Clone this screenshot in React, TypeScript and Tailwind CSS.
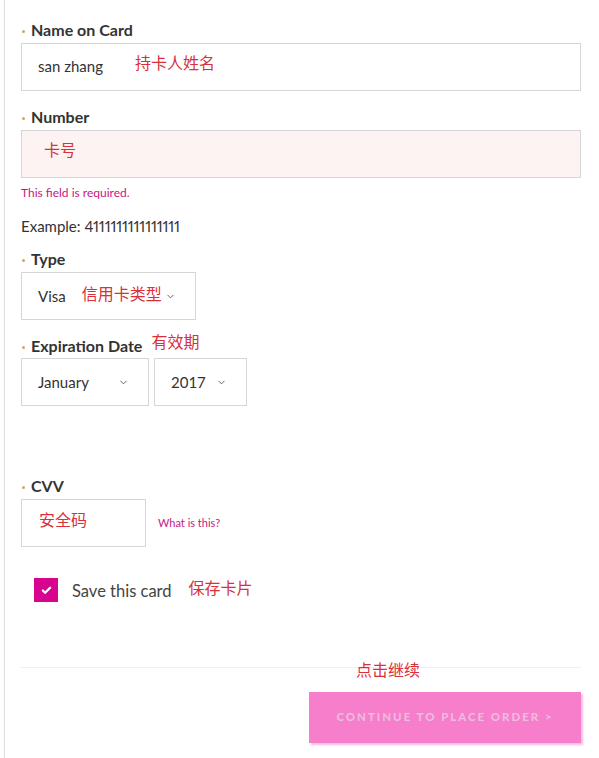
import { Check, ChevronDown } from "lucide-react"

const font = { fontFamily: "Lato, 'Noto Sans CJK SC', sans-serif" }

function Label({ children, note }: { children: React.ReactNode; note?: string }) {
  return (
    <div className="flex h-5 items-center gap-[6px] pl-[1px]">
      <span className="mt-[3px] h-[3px] w-[3px] rounded-full bg-[#c9a86b]" />
      <span className="text-[16px] font-bold text-[#333]">{children}</span>
      {note && <span className="ml-[3px] -mt-2 text-[16px] font-normal text-[#d9303a]">{note}</span>}
    </div>
  )
}

function Select({ value, note, width }: { value: string; note?: string; width: string }) {
  return (
    <div className={`flex h-12 items-center border border-[#d6d6d6] bg-white pl-4 pr-[19px] text-[15px] text-[#333] ${width}`}>
      <span>{value}</span>
      {note && <span className="ml-4 -mt-1 text-[16px] text-[#d9303a]">{note}</span>}
      <ChevronDown className="ml-auto h-[11px] w-[11px] shrink-0 text-[#444]" strokeWidth={1.75} />
    </div>
  )
}

export default function App() {
  return (
    <div className="min-h-[758px] bg-white" style={font}>
      <div className="ml-1 min-h-[758px] border-l border-[#dedede] pl-4 pr-[18px] pt-5">
        {/* name */}
        <Label>Name on Card</Label>
        <div className="mt-[3px] flex h-12 items-center border border-[#d6d6d6] pl-4 text-[15px] text-[#333]">
          <span className="-mt-[2px]">san zhang</span>
          <span className="ml-[32px] -mt-2 text-[16px] text-[#d9303a]">持卡人姓名</span>
        </div>

        {/* number */}
        <div className="mt-4">
          <Label>Number</Label>
          <div className="mt-[3px] flex h-12 items-center border border-[#d6d6d6] bg-[#fdf3f2] pl-[22px]">
            <span className="-mt-[9px] text-[16px] text-[#d9303a]">卡号</span>
          </div>
          <div className="mt-[8px] text-[12px] leading-[14px] text-[#c7177f]">This field is required.</div>
          <div className="mt-4 text-[15px] leading-5 text-[#333] proportional-nums">
            Example: <span className="tracking-[-0.15px]">4111111111111111</span>
          </div>
        </div>

        {/* type */}
        <div className="mt-[13px]">
          <Label>Type</Label>
          <div className="mt-[3px]">
            <Select value="Visa" note="信用卡类型" width="w-[175px]" />
          </div>
        </div>

        {/* expiry */}
        <div className="mt-4">
          <Label note="有效期">Expiration Date</Label>
          <div className="mt-[2px] flex gap-[5px]">
            <Select value="January" width="w-32" />
            <Select value="2017" width="w-[93px]" />
          </div>
        </div>

        {/* cvv */}
        <div className="mt-[70px]">
          <Label>CVV</Label>
          <div className="mt-[3px] flex items-center">
            <div className="flex h-12 w-[125px] items-center border border-[#d6d6d6] pl-[17px]">
              <span className="-mt-[6px] text-[16px] text-[#d9303a]">安全码</span>
            </div>
            <span className="ml-3 text-[11px] text-[#c7177f]">What is this?</span>
          </div>
        </div>

        {/* save */}
        <div className="mt-[30px] flex items-center pl-[13px]">
          <div className="flex h-6 w-6 items-center justify-center bg-[#d6048e]">
            <Check className="h-[11px] w-[11px] text-white" strokeWidth={5} />
          </div>
          <span className="ml-[14px] mt-[2px] text-[16.5px] text-[#444]">Save this card</span>
          <span className="ml-[17px] -mt-1 text-[16px] text-[#d9303a]">保存卡片</span>
        </div>

        {/* footer */}
        <div className="relative mt-[63px] border-t border-[#f0f0f0]">
          <span className="absolute left-[335px] -top-[10px] text-[16px] text-[#d9303a]">点击继续</span>
        </div>
        <div className="mt-6 flex justify-end">
          <button className="h-[51px] w-[272px] bg-[#f67ecb] pb-[2px] text-[11.5px] font-black tracking-[0.17em] text-[#efbadf] shadow-[2px_2px_2px_rgba(240,140,200,0.6)]">
            CONTINUE TO PLACE ORDER &gt;
          </button>
        </div>
      </div>
    </div>
  )
}
